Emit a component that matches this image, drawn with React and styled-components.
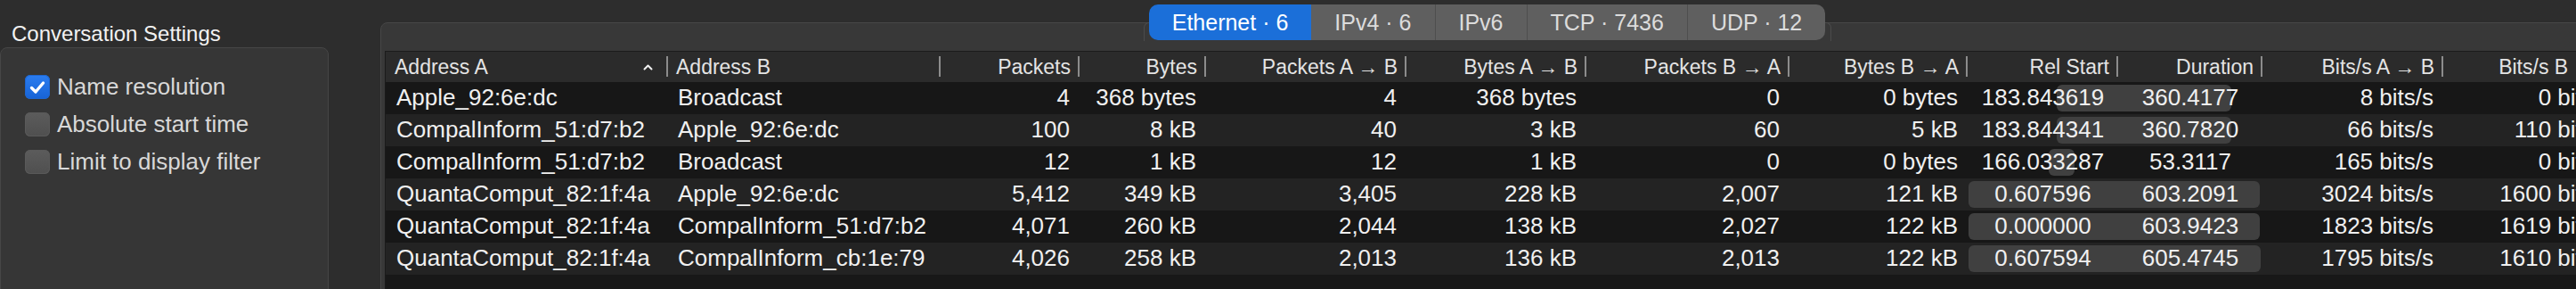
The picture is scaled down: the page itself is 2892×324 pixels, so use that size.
import React from "react";
import styled, { createGlobalStyle } from "styled-components";

const GlobalStyle = createGlobalStyle`
  html, body {
    margin: 0;
    padding: 0;
  }
  body {
    width: 2892px;
    height: 324px;
    overflow: hidden;
    background: #2d2d2d;
    font-family: "Liberation Sans", Arial, sans-serif;
    color: #ececec;
  }
`;

// column widths of the conversation table, measured off the header separators
const COLUMNS = "316px 306px 156px 142px 225px 202px 228px 200px 169px 162px 203px 200px";

const Window = styled.div`
  display: flex;
  align-items: flex-start;
  width: 2892px;
  height: 324px;
  overflow: hidden;
`;

const Sidebar = styled.div`
  flex: none;
  width: 369px;
  display: flex;
  flex-direction: column;
`;

const SectionTitle = styled.div`
  padding: 26px 0 0 13px;
  margin-bottom: 3px;
  font-size: 24px;
  line-height: 24px;
  color: #f2f2f2;
  white-space: nowrap;
`;

const GroupBox = styled.div`
  height: 300px;
  box-sizing: border-box;
  border: 1px solid #464646;
  border-radius: 8px;
  background: #363636;
  padding: 30px 0 0 27px;
  display: flex;
  flex-direction: column;
  gap: 15px;
`;

const CheckRow = styled.label`
  display: flex;
  align-items: center;
  gap: 8px;
  height: 27px;
  font-size: 26px;
  line-height: 27px;
  color: #d8d8d8;
  white-space: nowrap;
`;

const Box = styled.span`
  flex: none;
  width: 28px;
  height: 27px;
  box-sizing: border-box;
  border-radius: 6px;
  display: flex;
  align-items: center;
  justify-content: center;
  background: ${(p) =>
    p.$checked
      ? "linear-gradient(#2b7df0, #1763d6)"
      : "linear-gradient(#5c5c5c, #4f4f4f)"};
  box-shadow: inset 0 0 0 1px ${(p) => (p.$checked ? "#1d66d0" : "#5a5a5a")};
`;

const Panel = styled.div`
  flex: none;
  margin: 25px 0 0 58px;
  width: 2485px;
  height: 330px;
  box-sizing: border-box;
  border: 1px solid #474747;
  border-radius: 8px;
  background: #383838;
  display: flex;
  flex-direction: column;
`;

const TabRow = styled.div`
  display: flex;
  justify-content: center;
  margin-top: -21px;
`;

const TabStrip = styled.div`
  position: relative;
  display: flex;
  height: 40px;

  &::before {
    content: "";
    position: absolute;
    left: -6px;
    right: -7px;
    top: 20px;
    height: 20px;
    border: 1px solid #4b4b4b;
    border-bottom: none;
    border-radius: 6px 6px 0 0;
  }
`;

const Tab = styled.div`
  position: relative;
  display: flex;
  align-items: center;
  padding: 0 26px;
  font-size: 25px;
  white-space: nowrap;
  background: ${(p) => (p.$active ? "#1b6fd9" : "#5f5f5f")};
  color: ${(p) => (p.$active ? "#ffffff" : "#dcdcdc")};
  border-left: ${(p) => (p.$first || p.$afterActive ? "none" : "1px solid #4e4e4e")};

  &:first-child {
    border-radius: 10px 0 0 10px;
  }
  &:last-child {
    border-radius: 0 10px 10px 0;
  }
`;

const TableFrame = styled.div`
  margin: 12px 4px 0 4px;
  flex: 1;
  border: 1px solid #1b1b1b;
  background: #181818;
  overflow: hidden;
`;

const HeaderRow = styled.div`
  display: grid;
  grid-template-columns: ${COLUMNS};
  height: 34px;
  background: #2b2b2b;
`;

const HeaderCell = styled.div`
  position: relative;
  display: flex;
  align-items: center;
  justify-content: ${(p) => (p.$left ? "flex-start" : "flex-end")};
  padding: 0 9px 0 10px;
  font-size: 23px;
  color: #e4e4e4;
  white-space: nowrap;

  &::after {
    content: "";
    position: absolute;
    right: -1px;
    top: 5px;
    bottom: 6px;
    width: 2px;
    background: #8c8c8c;
  }
`;

const SortArrow = styled.svg`
  margin-left: auto;
  margin-right: 7px;
`;

const Row = styled.div`
  display: grid;
  grid-template-columns: ${COLUMNS};
  height: 36px;
  background: ${(p) => (p.$alt ? "#232323" : "#171717")};
`;

const Cell = styled.div`
  position: relative;
  padding: 0 10px 0 12px;
  font-size: 26px;
  line-height: 34px;
  color: #f0f0f0;
  white-space: nowrap;
  text-align: ${(p) => p.$align || "right"};
`;

const TimeSpan = styled.div`
  grid-column: span 2;
  position: relative;
  display: grid;
  grid-template-columns: 169px 162px;
`;

const TimeBar = styled.div`
  position: absolute;
  top: 3px;
  bottom: 3px;
  border-radius: 6px;
  background: #404040;
`;

const tabs = [
  { label: "Ethernet · 6", active: true },
  { label: "IPv4 · 6" },
  { label: "IPv6" },
  { label: "TCP · 7436" },
  { label: "UDP · 12" },
];

const headers = [
  { label: "Address A", left: true, sorted: true },
  { label: "Address B", left: true },
  { label: "Packets" },
  { label: "Bytes" },
  { label: "Packets A → B" },
  { label: "Bytes A → B" },
  { label: "Packets B → A" },
  { label: "Bytes B → A" },
  { label: "Rel Start" },
  { label: "Duration" },
  { label: "Bits/s A → B" },
  { label: "Bits/s B → A" },
];

const rows = [
  ["Apple_92:6e:dc", "Broadcast", "4", "368 bytes", "4", "368 bytes", "0", "0 bytes", "183.843619", "360.4177", "8 bits/s", "0 bits/s"],
  ["CompalInform_51:d7:b2", "Apple_92:6e:dc", "100", "8 kB", "40", "3 kB", "60", "5 kB", "183.844341", "360.7820", "66 bits/s", "110 bits/s"],
  ["CompalInform_51:d7:b2", "Broadcast", "12", "1 kB", "12", "1 kB", "0", "0 bytes", "166.033287", "53.3117", "165 bits/s", "0 bits/s"],
  ["QuantaComput_82:1f:4a", "Apple_92:6e:dc", "5,412", "349 kB", "3,405", "228 kB", "2,007", "121 kB", "0.607596", "603.2091", "3024 bits/s", "1600 bits/s"],
  ["QuantaComput_82:1f:4a", "CompalInform_51:d7:b2", "4,071", "260 kB", "2,044", "138 kB", "2,027", "122 kB", "0.000000", "603.9423", "1823 bits/s", "1619 bits/s"],
  ["QuantaComput_82:1f:4a", "CompalInform_cb:1e:79", "4,026", "258 kB", "2,013", "136 kB", "2,013", "122 kB", "0.607594", "605.4745", "1795 bits/s", "1610 bits/s"],
];

const settings = [
  { label: "Name resolution", checked: true },
  { label: "Absolute start time" },
  { label: "Limit to display filter" },
];

// timeline drawn behind Rel Start + Duration
const TIMELINE_WIDTH = 328;
const captureEnd = Math.max(...rows.map((r) => parseFloat(r[8]) + parseFloat(r[9])));

const Check = () => (
  <svg width="18" height="16" viewBox="0 0 18 16">
    <path d="M2.5 8.5 L7 13 L15.5 3" fill="none" stroke="#fff" strokeWidth="3.4" strokeLinecap="round" strokeLinejoin="round" />
  </svg>
);

const App = () => {
  return (
    <Window>
      <GlobalStyle />
      <Sidebar>
        <SectionTitle>Conversation Settings</SectionTitle>
        <GroupBox>
          {settings.map((s) => (
            <CheckRow key={s.label}>
              <Box $checked={s.checked}>{s.checked && <Check />}</Box>
              {s.label}
            </CheckRow>
          ))}
        </GroupBox>
      </Sidebar>

      <Panel>
        <TabRow>
          <TabStrip>
            {tabs.map((t, i) => (
              <Tab key={t.label} $active={t.active} $first={i === 0} $afterActive={i > 0 && tabs[i - 1].active}>
                {t.label}
              </Tab>
            ))}
          </TabStrip>
        </TabRow>

        <TableFrame>
          <HeaderRow>
            {headers.map((h) => (
              <HeaderCell key={h.label} $left={h.left}>
                {h.label}
                {h.sorted && (
                  <SortArrow width="11" height="7" viewBox="0 0 11 7">
                    <path d="M1.5 5.5 L5.5 1.5 L9.5 5.5" fill="none" stroke="#f0f0f0" strokeWidth="2" strokeLinecap="round" strokeLinejoin="round" />
                  </SortArrow>
                )}
              </HeaderCell>
            ))}
          </HeaderRow>

          {rows.map((r, i) => {
            const start = parseFloat(r[8]);
            const dur = parseFloat(r[9]);
            const left = 2 + (start / captureEnd) * TIMELINE_WIDTH;
            const width = (dur / captureEnd) * TIMELINE_WIDTH;
            return (
              <Row key={i} $alt={i % 2 === 1}>
                <Cell $align="left">{r[0]}</Cell>
                <Cell $align="left">{r[1]}</Cell>
                {r.slice(2, 8).map((v, j) => (
                  <Cell key={j}>{v}</Cell>
                ))}
                <TimeSpan>
                  <TimeBar style={{ left, width }} />
                  <Cell $align="center">{r[8]}</Cell>
                  <Cell $align="center">{r[9]}</Cell>
                </TimeSpan>
                <Cell>{r[10]}</Cell>
                <Cell>{r[11]}</Cell>
              </Row>
            );
          })}
        </TableFrame>
      </Panel>
    </Window>
  );
};

export default App;
